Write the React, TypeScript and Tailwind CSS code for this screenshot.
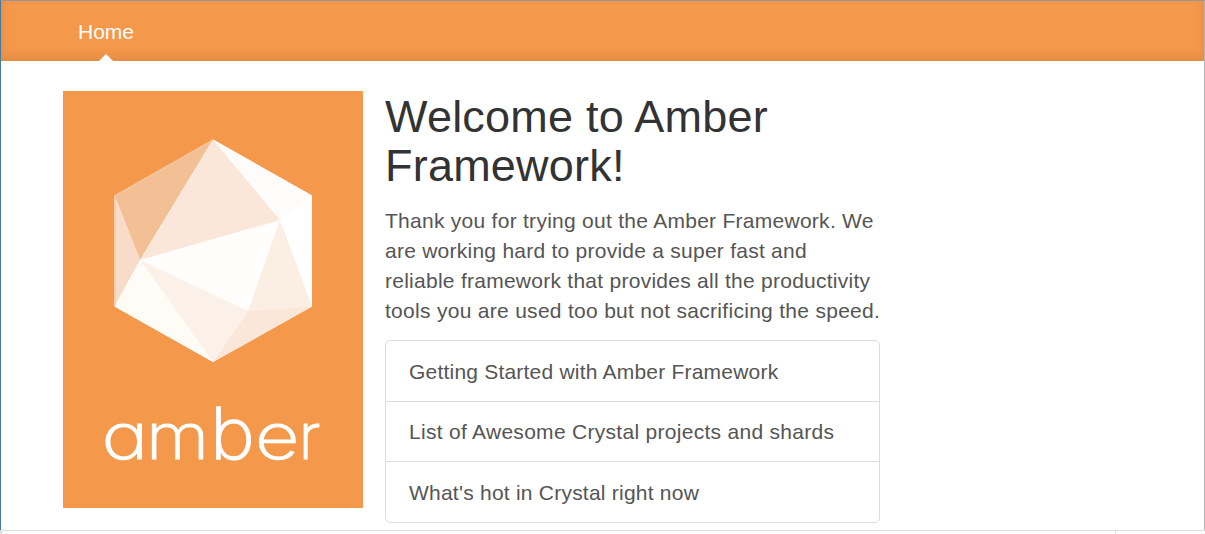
const links = [
  { label: "Getting Started with Amber Framework", size: "h-[61px] pt-px tracking-[0.21px]" },
  { label: "List of Awesome Crystal projects and shards", size: "h-[60px] tracking-[0.29px]" },
  { label: "What's hot in Crystal right now", size: "h-[60px] pt-px tracking-[0.23px]" },
];

const lines = [
  { text: "Thank you for trying out the Amber Framework. We", spacing: "tracking-[0.27px]" },
  { text: "are working hard to provide a super fast and", spacing: "tracking-[0.25px]" },
  { text: "reliable framework that provides all the productivity", spacing: "tracking-[0.26px]" },
  { text: "tools you are used too but not sacrificing the speed.", spacing: "tracking-[0.29px]" },
];

const wordmark = [
  { letter: "a", x: 38.5, sx: 1.2, sy: 0.98 },
  { letter: "m", x: 83, sx: 1.1, sy: 0.98 },
  { letter: "b", x: 147, sx: 1.15, sy: 1.08 },
  { letter: "e", x: 192, sx: 1.17, sy: 0.98 },
  { letter: "r", x: 235.5, sx: 0.97, sy: 0.98 },
];

function AmberLogo() {
  return (
    <svg
      viewBox="0 0 300 417"
      className="block h-[417px] w-[300px] shrink-0 bg-[#f4984b]"
      role="img"
      aria-label="Amber"
    >
      <polygon points="150,48.5 249,104.5 249,215.5 150,271 51.5,215.5 51.5,104.5" fill="#fffefc" />
      <polygon points="150,48.5 51.5,104.5 77,169" fill="#f3bf94" />
      <polygon points="51.5,104.5 77,169 51.5,215.5" fill="#f8dcc9" />
      <polygon points="150,48.5 77,169 217,129" fill="#fae7da" />
      <polygon points="150,48.5 217,129 249,104.5" fill="#fdfcfa" />
      <polygon points="217,129 249,104.5 249,215.5" fill="#ffffff" />
      <polygon points="217,129 249,215.5 185,220" fill="#fbeee2" />
      <polygon points="185,220 249,215.5 150,271" fill="#fae7da" />
      <polygon points="77,169 185,220 150,271" fill="#fcf1e9" />
      <polygon points="77,169 51.5,215.5 150,271" fill="#fffbf5" />
      <path d="M150 49 52 105V215.5" fill="none" stroke="#f9c79c" strokeWidth="1" />
      <g className="fill-white stroke-white stroke-[1.2px] font-['Inter',sans-serif] text-[66px] font-extralight [font-feature-settings:'cv11']">
        {wordmark.map(({ letter, x, sx, sy }) => (
          <text key={letter} transform={`translate(${x} 367.5) scale(${sx} ${sy})`}>
            {letter}
          </text>
        ))}
      </g>
    </svg>
  );
}

export default function App() {
  return (
    <div className="flex h-[534px] w-full flex-col overflow-hidden bg-white font-['Liberation_Sans',sans-serif] text-[21px] leading-[30px] text-[#555555]">
      <div className="flex h-[530px] flex-col border-t border-r border-l border-t-[#969696] border-r-[#b5b5b5] border-l-[#47799a]">
        <header className="h-[60px] shrink-0 bg-[#f4984b] pl-[62px] shadow-[inset_0_-5px_10px_rgba(0,0,0,0.08)]">
          <nav className="flex h-full w-[86px] flex-col items-center justify-between pt-4">
            <a href="#" className="whitespace-nowrap text-white">
              Home
            </a>
            <svg viewBox="0 0 14 7" className="h-[7px] w-[14px]" aria-hidden="true">
              <path d="M0 7 7 0l7 7Z" fill="#fff" />
            </svg>
          </nav>
        </header>
        <main className="flex gap-[22px] pt-[30px] pl-[62px]">
          <AmberLogo />
          <section className="w-[495px]">
            <h1 className="pt-px text-[45px] leading-[49px] tracking-[0.22px] text-[#333333]">
              Welcome to Amber
              <br />
              Framework!
            </h1>
            <p className="mt-4 whitespace-nowrap">
              {lines.map(({ text, spacing }) => (
                <span key={text} className={`block ${spacing}`}>
                  {text}{" "}
                </span>
              ))}
            </p>
            <ul className="mt-[14px] divide-y divide-[#dddddd] rounded-[5px] border border-[#dddddd]">
              {links.map(({ label, size }) => (
                <li key={label} className={`${size} flex items-center pl-[23px]`}>
                  <a href="#" className="whitespace-nowrap">
                    {label}
                  </a>
                </li>
              ))}
            </ul>
          </section>
        </main>
      </div>
      <footer className="flex h-1 shrink-0 border-t border-l-2 border-[#dedede] bg-[#fcfcfc]">
        <div className="w-[1114px] border-r border-[#dedede]" />
      </footer>
    </div>
  );
}
